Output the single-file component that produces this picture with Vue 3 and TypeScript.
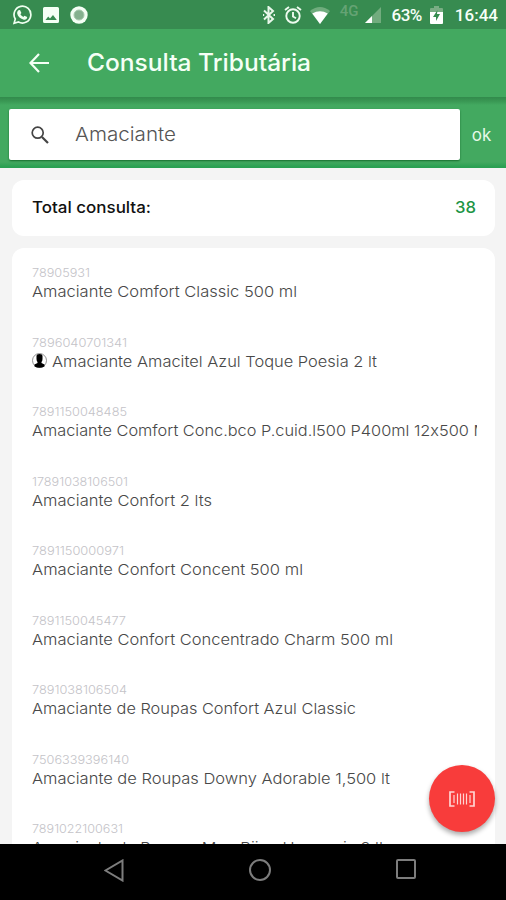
<script setup lang="ts">
interface Product {
  code: string
  name: string
  codeWidth: number
  nameWidth: number
  own?: boolean
}

const products: Product[] = [
  { code: '78905931', name: 'Amaciante Comfort Classic 500 ml', codeWidth: 58, nameWidth: 265 },
  { code: '7896040701341', name: 'Amaciante Amacitel Azul Toque Poesia 2 lt', codeWidth: 95, nameWidth: 325, own: true },
  { code: '7891150048485', name: 'Amaciante Comfort Conc.bco P.cuid.l500 P400ml 12x500 Ml', codeWidth: 95, nameWidth: 460 },
  { code: '17891038106501', name: 'Amaciante Confort 2 lts', codeWidth: 96, nameWidth: 180 },
  { code: '7891150000971', name: 'Amaciante Confort Concent 500 ml', codeWidth: 92, nameWidth: 271 },
  { code: '7891150045477', name: 'Amaciante Confort Concentrado Charm 500 ml', codeWidth: 94, nameWidth: 361 },
  { code: '7891038106504', name: 'Amaciante de Roupas Confort Azul Classic', codeWidth: 95, nameWidth: 324 },
  { code: '7506339396140', name: 'Amaciante de Roupas Downy Adorable 1,500 lt', codeWidth: 97, nameWidth: 358 },
  { code: '7891022100631', name: 'Amaciante de Roupas Mon Bijou Harmonia 2 lt', codeWidth: 91, nameWidth: 352 },
]
</script>

<template>
  <main class="screen">
    <header class="status">
      <div class="notifications">
        <svg width="20" height="20" viewBox="0 0 20 20"><path d="M2.1 18.2 3.3 14A8.4 8.4 0 1 1 6.5 17Z" fill="none" stroke="#effff0" stroke-width="1.7" /><path d="M6.5 5.2 8 5l1.4 3-1 1.3c.7 1.2 1.6 2 2.9 2.6l1.1-1.2 2.8 1.4c-.1 2.3-2 3.1-4 2.4-3.1-.9-5.5-3.4-6-6-.2-1.4.3-2.6 1.3-3.3Z" fill="#effff0" /></svg>
        <svg width="16" height="16" viewBox="0 0 16 16"><path fill-rule="evenodd" d="M1.5 0h13Q16 0 16 1.5v13q0 1.5-1.5 1.5h-13Q0 16 0 14.500v-13Q0 0 1.500 0ZM2.500 13h11.300L10 8l-3 3.600-1.800-2Z" fill="#f4fff5" /></svg>
        <svg width="18" height="18" viewBox="0 0 18 18"><circle cx="9" cy="9" r="8.700" fill="#f4fff5" /><circle cx="9" cy="9" r="5" fill="#85b18f" stroke="#a5c8ac" /></svg>
      </div>
      <div class="system">
        <svg class="bluetooth" width="12" height="18" viewBox="0 0 12 18"><path d="m1 4.500 9 8.500-4.500 4V1L10 5 1 13.500M0 9h1.200M10.500 9H12" fill="none" stroke="#e8f7ea" stroke-width="2" /></svg>
        <svg class="alarm" width="18" height="18" viewBox="0 0 18 18"><g fill="none" stroke="#eefbef" stroke-width="1.900"><circle cx="9" cy="10" r="6.700" /><path d="m1 4 4-3M13 1l4 3M9 6v4.500l3 1.800" /></g></svg>
        <svg class="wifi" width="20" height="17" viewBox="0 0 22 17" preserveAspectRatio="none"><path d="M0 4q11-8 22 0L11 17Z" fill="#6fac7d" /><path d="M2.500 6.500q8.500-4.500 17 0L11 17Z" fill="#fff" /></svg>
        <span class="network">4G</span>
        <svg class="signal" width="16" height="16" viewBox="0 0 16 16"><path d="M16 0v16H0Z" fill="#72ac7e" /><path d="M7 9v7H0Z" fill="#fff" /></svg>
        <span class="percent">63%</span>
        <svg class="battery" width="13" height="18" viewBox="0 0 13 18"><path d="M4 0h5v2h3q1 0 1 1v4H0V3q0-1 1-1h3Z" fill="#79ad83" /><path d="M0 6h13v11q0 1-1 1H1q-1 0-1-1Z" fill="#fff" /><path d="M7.500 4 3 11h3v4l4-7H7Z" fill="#358c4f" /></svg>
        <span class="clock">16:44</span>
      </div>
    </header>

    <nav class="toolbar">
      <svg width="20" height="20" viewBox="0 0 20 20"><path d="M10 1 1.500 10 10 19M2 10h18" fill="none" stroke="#f4fff5" stroke-width="2.200" /></svg>
      <h1><svg class="fit" width="224" height="34"><text x="0" y="25" textLength="224" lengthAdjust="spacingAndGlyphs">Consulta Tributária</text></svg></h1>
    </nav>

    <section class="searchbar">
      <div class="field">
        <svg width="18" height="18" viewBox="0 0 18 18"><circle cx="6.700" cy="6.700" r="5.500" fill="none" stroke="#444" stroke-width="1.700" /><path d="m11 11 6 6" stroke="#444" stroke-width="2.200" /></svg>
        <svg class="query fit" width="102" height="28"><text x="0" y="20" textLength="101" lengthAdjust="spacingAndGlyphs">Amaciante</text></svg>
      </div>
      <button class="ok">ok</button>
    </section>

    <section class="content">
      <div class="card total">
        <svg class="fit" width="120" height="26"><text x="0" y="18" textLength="119" lengthAdjust="spacingAndGlyphs">Total consulta:</text></svg>
        <svg class="fit count" width="21" height="26"><text x="0" y="18" textLength="21" lengthAdjust="spacingAndGlyphs">38</text></svg>
      </div>
      <ul class="card products">
        <li v-for="product in products" :key="product.code">
          <svg class="fit code" :width="product.codeWidth" height="16"><text x="0" y="13" :textLength="product.codeWidth" lengthAdjust="spacingAndGlyphs">{{ product.code }}</text></svg>
          <div class="name">
            <svg v-if="product.own" class="person" width="15" height="15" viewBox="0 0 15 15"><circle cx="7.500" cy="7.500" r="7" fill="#fff" stroke="#777" stroke-width=".8" /><path d="M4.500 3q0-2 3-2t3 2v3q0 2-1 3v1l3 1.500v2q-5 2.500-10 0v-2L5.500 10V9q-1-1-1-3Z" fill="#000" /></svg>
            <svg class="fit" :width="product.nameWidth" height="22"><text x="0" y="16.500" :textLength="product.nameWidth" lengthAdjust="spacingAndGlyphs">{{ product.name }}</text></svg>
          </div>
        </li>
      </ul>
    </section>

    <button class="scan" aria-label="Scan">
      <svg width="26" height="16" viewBox="0 0 26 16"><g fill="none" stroke="#ffd5d3" stroke-width="1.700"><path d="M5.500 1H1v14h4.500M20.500 1H25v14h-4.500" /><path d="M5 4v8M8.500 2.500v11M11.500 2.500v11M14.500 2.500v11M17.500 2.500v11M21 4v8" stroke-width="1.200" /></g></svg>
    </button>

    <footer class="navigation">
      <svg width="20" height="23" viewBox="0 0 20 23"><path d="M18.500 1.500v20L1.500 11.500Z" /></svg>
      <svg width="22" height="22" viewBox="0 0 22 22"><circle cx="11" cy="11" r="10" /></svg>
      <svg class="recents" width="20" height="20" viewBox="0 0 20 20"><rect x="1" y="1" width="18" height="18" rx="1" /></svg>
    </footer>
  </main>
</template>

<style>
body {
  margin: 0;
}
</style>

<style scoped>
* {
  box-sizing: border-box;
}
.screen {
  position: relative;
  display: flex;
  flex-direction: column;
  width: 506px;
  height: 900px;
  overflow: hidden;
  background: #f4f4f4;
  font-family: Inter, "Liberation Sans", sans-serif;
  font-feature-settings: "calt" 0;
}
svg {
  display: block;
  flex-shrink: 0;
}
button {
  border: 0;
  padding: 0;
  font-family: inherit;
}
.fit {
  overflow: visible;
}
.status {
  flex: none;
  display: flex;
  justify-content: space-between;
  height: 29px;
  padding: 0 8px 0 12px;
  background: #378b50;
}
.notifications {
  display: flex;
  align-items: center;
  gap: 11px;
}
.system {
  display: flex;
  align-items: center;
  padding-top: 1px;
  color: #f8fff8;
  font: 500 17px Roboto, sans-serif;
}
.alarm { margin-left: 9px; }
.wifi { margin-left: 8px; }
.network {
  margin: -9px 0 0 10px;
  color: #65a374;
  font-size: 15px;
}
.signal { margin-left: 6px; }
.percent { margin-left: 11px; letter-spacing: -.5px; }
.battery { margin-left: 8px; }
.clock { margin-left: 12px; }
.toolbar {
  flex: none;
  display: flex;
  align-items: center;
  gap: 38px;
  height: 68px;
  padding-left: 29px;
  background: #43a960;
}
h1 {
  margin: 0;
  fill: #f5fff6;
  font-size: 24px;
  font-weight: 500;
}
.searchbar {
  flex: none;
  display: flex;
  height: 71px;
  padding: 12px 0 8px 9px;
  background: linear-gradient(#328a4c 0, #399753 4px, #43a960 8px, #43a960 65px, #2aa052 70px);
}
.field {
  display: flex;
  align-items: center;
  gap: 26px;
  width: 451px;
  height: 51px;
  padding-left: 22px;
  border-radius: 2px;
  background: #fff;
  box-shadow: 0 1px 2px #176d2e;
}
.query {
  fill: #555;
  font-size: 19px;
  font-weight: 300;
}
.ok {
  width: 43px;
  height: 51px;
  background: none;
  color: #e6f9e8;
  font-size: 17px;
}
.content {
  flex: none;
  display: flex;
  flex-direction: column;
  gap: 12px;
  height: 676px;
  padding: 12px 11px 0 12px;
  overflow: hidden;
}
.card {
  border-radius: 12px;
  background: #fff;
}
.total {
  flex: none;
  display: flex;
  align-items: center;
  justify-content: space-between;
  height: 56px;
  padding: 0 19px 0 20px;
  fill: #111;
  font-size: 16px;
  font-weight: 500;
}
.count { fill: #209545; }
.products {
  flex: none;
  height: 660px;
  margin: 0;
  padding: 16px 18px 0 19.500px;
  list-style: none;
}
li {
  height: 69.500px;
  overflow: hidden;
}
.code {
  fill: #c4c3c8;
  font-size: 12px;
  font-weight: 300;
}
.name {
  display: flex;
  align-items: center;
  gap: 5px;
  height: 22px;
  fill: #484848;
  font-size: 15px;
  font-weight: 300;
}
.scan {
  position: absolute;
  top: 765px;
  left: 429px;
  display: grid;
  place-items: center;
  width: 66px;
  height: 67px;
  border-radius: 50%;
  background: #f83c3b;
  box-shadow: 0 3px 5px #0005;
}
.navigation {
  flex: none;
  display: flex;
  align-items: center;
  gap: 125px;
  height: 56px;
  padding: 0 0 4px 104px;
  background: #000;
  fill: none;
  stroke: #7d7d7d;
  stroke-width: 2;
}
.recents {
  margin-bottom: 2px;
}
</style>
